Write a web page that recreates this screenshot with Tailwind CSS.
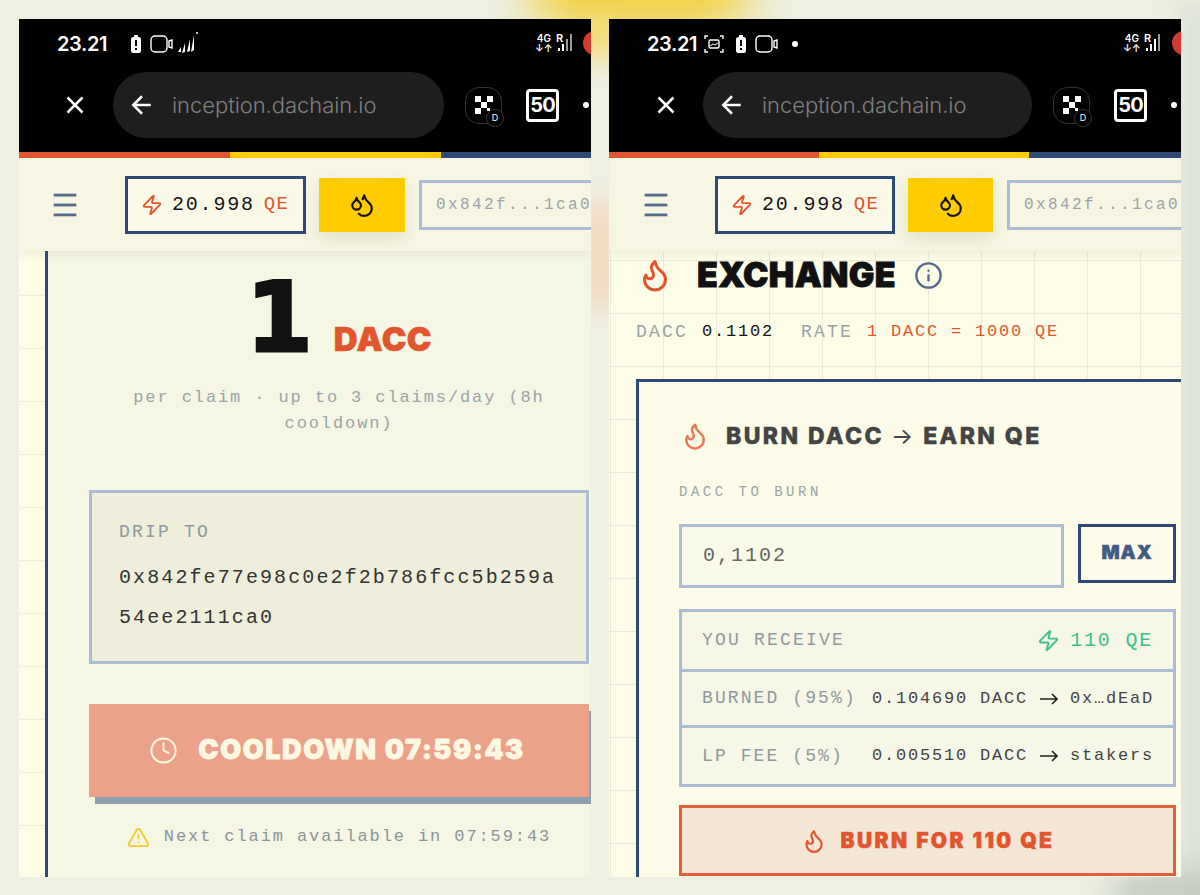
<!DOCTYPE html>
<html lang="en">
<head>
    <meta charset="UTF-8">
    <meta name="viewport" content="width=device-width, initial-scale=1.0">
    <title>DACChain Inception</title>
    <script src="https://cdn.jsdelivr.net/npm/@tailwindcss/browser@4"></script>
</head>
<body class="relative w-[1200px] h-[895px] overflow-hidden bg-[#eef0e2] font-['Liberation_Mono',monospace]">
    <!-- blurred wallpaper behind the two screenshots -->
    <div class="absolute left-[530px] top-[-50px] w-[220px] h-[80px] rounded-full bg-[#f2cf3c] blur-xl"></div>
    <div class="absolute left-[590px] top-[10px] w-[24px] h-[50px] rounded-full bg-[#f4da6c] blur-md"></div>
    <div class="absolute left-[585px] top-[200px] w-[30px] h-[110px] rounded-full bg-[#f5d5b8] blur-md"></div>
    <div class="absolute left-[1178px] top-[0px] w-[40px] h-[895px] bg-[#dde2d6] blur-md"></div>
    <div class="absolute left-[1110px] top-[870px] w-[130px] h-[50px] rounded-full bg-[#c3cbc1] blur-lg"></div>

    <div class="relative flex gap-[18px] pt-[19px] pl-[19px]">

        <!-- LEFT SCREEN: faucet -->
        <div class="w-[572px] h-[858px] overflow-hidden flex flex-col bg-[#f5f6e4]">
            <div class="h-[133px] bg-black shrink-0 text-white font-['Inter',sans-serif]">
                <div class="h-[48px] flex items-center relative pt-[2px]">
                    <span class="ml-[38px] w-[50px] text-[20px] tracking-[-0.4px] font-semibold leading-none">23.21</span>
                    <svg class="ml-[22px]" width="14" height="20" viewBox="0 0 14 20"><rect x="2" y="3" width="10" height="16" rx="2.5" fill="#fff"/><rect x="5" y="1" width="4" height="2" fill="#fff"/><rect x="6" y="6" width="2" height="6" fill="#000"/><rect x="6" y="14" width="2" height="2" fill="#000"/></svg>
                    <svg class="ml-[7px]" width="24" height="20" viewBox="0 0 24 20" fill="none" stroke="#fff" stroke-width="1.4"><rect x="1" y="2" width="16" height="16" rx="4"/><path d="M19 7l3-1v8l-3-1z"/></svg>
                    <svg class="ml-[2px] mb-[3px]" width="24" height="26" viewBox="0 0 24 26" fill="#fff"><path d="M2 22l3-5v5zM6 23l3-10v9zM11 22l3-13v12zM15 22l3-17v15z"/><circle cx="21" cy="3" r="1"/></svg>
                    <div class="absolute left-[516px] top-[14px] text-[10px] font-semibold leading-[10px] text-center">4G<br>↓↑</div>
                    <div class="absolute left-[537px] top-[14px] text-[11px] font-semibold leading-none">R</div>
                    <svg class="absolute left-[537px] top-[14px]" width="20" height="20" viewBox="0 0 20 20" fill="#fff"><rect x="2" y="15" width="2" height="3"/><rect x="6" y="11" width="2" height="7"/><rect x="10" y="6" width="2" height="12" fill="#9a9a9a"/><rect x="14" y="1" width="2" height="17" fill="#9a9a9a"/></svg>
                    <div class="absolute left-[564px] top-[12px] w-[24px] h-[24px] rounded-full bg-[#d43a30]"></div>
                </div>
                <div class="flex items-center mt-[5px]">
                    <svg class="ml-[41px] shrink-0" width="30" height="30" viewBox="0 0 24 24" fill="none" stroke="#fff" stroke-width="2"><path d="M18 6 6 18"/><path d="m6 6 12 12"/></svg>
                    <div class="ml-[23px] w-[331px] h-[66px] rounded-full bg-[#1e1e1e] flex items-center shrink-0">
                        <svg class="ml-[14px]" width="30" height="30" viewBox="0 0 24 24" fill="none" stroke="#fff" stroke-width="2"><path d="m12 19-7-7 7-7"/><path d="M19 12H5"/></svg>
                        <span class="ml-[15px] text-[22px] font-light text-[#808080] tracking-[-0.05px]">inception.dachain.io</span>
                    </div>
                    <div class="relative ml-[21px] w-[37px] h-[37px] rounded-[14px] border border-[#333] shrink-0 flex items-center justify-center">
                        <svg width="18" height="18" viewBox="0 0 6 6" fill="#fff"><rect width="2" height="2"/><rect x="4" width="2" height="2"/><rect x="2" y="2" width="2" height="2"/><rect y="4" width="2" height="2"/><rect x="4" y="4" width="1" height="1"/></svg>
                        <div class="absolute right-[-3px] bottom-[-4px] w-[18px] h-[18px] rounded-full bg-black border border-[#333] text-[9px] leading-[16px] text-center">D</div>
                    </div>
                    <div class="ml-[24px] w-[33px] h-[33px] border-[3px] border-white rounded-[4px] text-[20px] font-bold tracking-[-1px] leading-[27px] text-center shrink-0">50</div>
                    <div class="ml-[24px] w-[6px] h-[6px] rounded-full bg-white shrink-0"></div>
                </div>
            </div>
            <div class="h-[6px] flex shrink-0">
                <div class="w-[211px] shrink-0 bg-[#e2562f]"></div>
                <div class="w-[211px] shrink-0 bg-[#ffcc00]"></div>
                <div class="w-[211px] shrink-0 bg-[#2c4a75]"></div>
            </div>
            <div class="relative z-10 h-[93px] shrink-0 flex items-center bg-[#f6f6e3] shadow-[0_3px_8px_rgba(120,120,90,0.12)]">
                <svg class="ml-[29px] shrink-0" width="34" height="34" viewBox="0 0 24 24" fill="none" stroke="#566b8c" stroke-width="2"><path d="M4 5h16"/><path d="M4 12h16"/><path d="M4 19h16"/></svg>
                <div class="ml-[43px] w-[181px] h-[58px] border-[3px] border-[#2c4a75] bg-[#fbfae9] flex items-center shrink-0">
                    <svg class="ml-[13px]" width="22" height="22" viewBox="0 0 24 24" fill="none" stroke="#e2562f" stroke-width="2" stroke-linejoin="round"><path d="M4 14a1 1 0 0 1-.78-1.63l9.9-10.2a.5.5 0 0 1 .86.46l-1.92 6.02A1 1 0 0 0 13 10h7a1 1 0 0 1 .78 1.63l-9.9 10.2a.5.5 0 0 1-.86-.46l1.92-6.02A1 1 0 0 0 11 14z"/></svg>
                    <span class="ml-[9px] text-[20px] tracking-[1.8px] text-[#141414]">20.998</span>
                    <span class="ml-[9px] text-[19px] tracking-[1.4px] text-[#e2562f]">QE</span>
                </div>
                <div class="ml-[13px] w-[86px] h-[54px] bg-[#ffcc00] flex items-center justify-center shrink-0 shadow-[0_6px_14px_rgba(120,110,60,0.15)]">
                    <svg width="26" height="26" viewBox="0 0 24 24" fill="none" stroke="#141414" stroke-width="2" stroke-linecap="round" stroke-linejoin="round"><path d="M7 16.3c2.2 0 4-1.83 4-4.05 0-1.16-.57-2.26-1.71-3.19S7.29 6.75 7 5.3c-.29 1.45-1.14 2.84-2.29 3.76S3 11.1 3 12.25c0 2.22 1.8 4.05 4 4.05z"/><path d="M12.56 6.6A10.97 10.97 0 0 0 14 3.02c.5 2.5 2 4.9 4 6.5s3 3.5 3 5.5a6.98 6.98 0 0 1-11.91 4.97"/></svg>
                </div>
                <div class="ml-[14px] w-[220px] h-[50px] border-[3px] border-[#adbcd5] flex items-center pl-[14px] shrink-0 text-[16px] tracking-[2.4px] text-[#9aa4a8] whitespace-nowrap">0x842f...1ca0</div>
            </div>
            <div class="flex flex-1 min-h-0">
                <div class="w-[26px] shrink-0 bg-[#fdfde8] bg-[linear-gradient(#eeeedd_1px,transparent_1px)] bg-[size:100%_53px] bg-[position:0_44px]"></div>
                <div class="w-[546px] shrink-0 border-l-[3px] border-[#2c4a75] pl-[41px]">
                    <div class="w-[500px]">
                        <div class="flex items-baseline justify-center h-[134px] pt-[12px] leading-none">
                            <span class="font-['DejaVu_Sans',sans-serif] font-bold text-[#111] text-[96px] leading-[110px] [-webkit-text-stroke:3px_#111]">1</span>
                            <span class="ml-[21px] font-['Inter',sans-serif] font-black text-[#e2562f] text-[33px] tracking-[0.5px] [-webkit-text-stroke:0.6px_#e2562f]">DACC</span>
                        </div>
                        <p class="text-center text-[17px] leading-[26px] tracking-[1.9px] text-[#9aa5a8]">per claim · up to 3 claims/day (8h cooldown)</p>
                        <div class="mt-[53px] h-[174px] border-[3px] border-[#adbcd5] bg-[#eeeeda] pl-[27px] pt-[27px]">
                            <div class="text-[18px] leading-[24px] tracking-[2.2px] text-[#8f9a9e]">DRIP TO</div>
                            <div class="mt-[14px] text-[20px] leading-[40px] tracking-[2.1px] text-[#333]">0x842fe77e98c0e2f2b786fcc5b259a<br>54ee2111ca0</div>
                        </div>
                        <div class="mt-[40px] h-[93px] bg-[#eba288] shadow-[6px_7px_0_#8e9fb0] flex items-center justify-center font-['Inter',sans-serif] font-black text-[27px] tracking-[1.6px] text-[#fdf8e2] [-webkit-text-stroke:0.8px_#fdf8e2]">
                            <svg class="mr-[20px] ml-[-4px]" width="29" height="29" viewBox="0 0 24 24" fill="none" stroke="#fdf8e2" stroke-width="1.6" stroke-linecap="round" stroke-linejoin="round"><circle cx="12" cy="12" r="10"/><path d="M12 6v6l4 2"/></svg>
                            COOLDOWN 07:59:43
                        </div>
                        <div class="mt-[28px] flex items-center justify-center text-[17px] tracking-[1.9px] leading-[24px] text-[#8a9599]">
                            <svg class="mr-[14px]" width="23" height="23" viewBox="0 0 24 24" fill="none" stroke="#f2cd2c" stroke-width="2" stroke-linecap="round" stroke-linejoin="round"><path d="m21.73 18-8-14a2 2 0 0 0-3.48 0l-8 14A2 2 0 0 0 4 21h16a2 2 0 0 0 1.73-3"/><path d="M12 9v4"/><path d="M12 17h.01"/></svg>
                            Next claim available in 07:59:43
                        </div>
                    </div>
                </div>
            </div>
        </div>

        <!-- RIGHT SCREEN: exchange -->
        <div class="w-[572px] h-[858px] overflow-hidden flex flex-col bg-[#fdfde8]">
            <div class="h-[133px] bg-black shrink-0 text-white font-['Inter',sans-serif]">
                <div class="h-[48px] flex items-center relative pt-[2px]">
                    <span class="ml-[38px] w-[50px] text-[20px] tracking-[-0.4px] font-semibold leading-none">23.21</span>
                    <svg class="ml-[6px]" width="22" height="22" viewBox="0 0 22 22" fill="none" stroke="#fff" stroke-width="1.4"><path d="M2 6V3h3M17 3h3v3M2 16v3h3M17 19h3v-3"/><rect x="6" y="7" width="10" height="8" rx="1.5"/><path d="M7 13l3-2 2 1 3-2" stroke-width="1"/></svg>
                    <svg class="ml-[9px]" width="14" height="20" viewBox="0 0 14 20"><rect x="2" y="3" width="10" height="16" rx="2.5" fill="#fff"/><rect x="5" y="1" width="4" height="2" fill="#fff"/><rect x="6" y="6" width="2" height="6" fill="#000"/><rect x="6" y="14" width="2" height="2" fill="#000"/></svg>
                    <svg class="ml-[7px]" width="24" height="20" viewBox="0 0 24 20" fill="none" stroke="#fff" stroke-width="1.4"><rect x="1" y="2" width="16" height="16" rx="4"/><path d="M19 7l3-1v8l-3-1z"/></svg>
                    <div class="ml-[13px] w-[6px] h-[6px] rounded-full bg-white"></div>
                    <div class="absolute left-[514px] top-[14px] text-[10px] font-semibold leading-[10px] text-center">4G<br>↓↑</div>
                    <div class="absolute left-[535px] top-[14px] text-[11px] font-semibold leading-none">R</div>
                    <svg class="absolute left-[535px] top-[14px]" width="20" height="20" viewBox="0 0 20 20" fill="#fff"><rect x="2" y="15" width="2" height="3"/><rect x="6" y="11" width="2" height="7"/><rect x="10" y="6" width="2" height="12"/><rect x="14" y="1" width="2" height="17" fill="#9a9a9a"/></svg>
                    <div class="absolute left-[563px] top-[12px] w-[24px] h-[24px] rounded-full bg-[linear-gradient(90deg,#d43a30_50%,#999_50%)]"></div>
                </div>
                <div class="flex items-center mt-[5px]">
                    <svg class="ml-[42px] shrink-0" width="30" height="30" viewBox="0 0 24 24" fill="none" stroke="#fff" stroke-width="2"><path d="M18 6 6 18"/><path d="m6 6 12 12"/></svg>
                    <div class="ml-[22px] w-[329px] h-[66px] rounded-full bg-[#1e1e1e] flex items-center shrink-0">
                        <svg class="ml-[14px]" width="30" height="30" viewBox="0 0 24 24" fill="none" stroke="#fff" stroke-width="2"><path d="m12 19-7-7 7-7"/><path d="M19 12H5"/></svg>
                        <span class="ml-[15px] text-[22px] font-light text-[#808080] tracking-[-0.05px]">inception.dachain.io</span>
                    </div>
                    <div class="relative ml-[21px] w-[37px] h-[37px] rounded-[14px] border border-[#333] shrink-0 flex items-center justify-center">
                        <svg width="18" height="18" viewBox="0 0 6 6" fill="#fff"><rect width="2" height="2"/><rect x="4" width="2" height="2"/><rect x="2" y="2" width="2" height="2"/><rect y="4" width="2" height="2"/><rect x="4" y="4" width="1" height="1"/></svg>
                        <div class="absolute right-[-3px] bottom-[-4px] w-[18px] h-[18px] rounded-full bg-black border border-[#333] text-[9px] leading-[16px] text-center">D</div>
                    </div>
                    <div class="ml-[24px] w-[33px] h-[33px] border-[3px] border-white rounded-[4px] text-[20px] font-bold tracking-[-1px] leading-[27px] text-center shrink-0">50</div>
                    <div class="ml-[24px] w-[6px] h-[6px] rounded-full bg-white shrink-0"></div>
                </div>
            </div>
            <div class="h-[6px] flex shrink-0">
                <div class="w-[210px] shrink-0 bg-[#e2562f]"></div>
                <div class="w-[210px] shrink-0 bg-[#ffcc00]"></div>
                <div class="w-[211px] shrink-0 bg-[#2c4a75]"></div>
            </div>
            <div class="relative z-10 h-[93px] shrink-0 flex items-center bg-[#f6f6e3] shadow-[0_3px_8px_rgba(120,120,90,0.12)]">
                <svg class="ml-[30px] shrink-0" width="34" height="34" viewBox="0 0 24 24" fill="none" stroke="#566b8c" stroke-width="2"><path d="M4 5h16"/><path d="M4 12h16"/><path d="M4 19h16"/></svg>
                <div class="ml-[42px] w-[180px] h-[58px] border-[3px] border-[#2c4a75] bg-[#fbfae9] flex items-center shrink-0">
                    <svg class="ml-[13px]" width="22" height="22" viewBox="0 0 24 24" fill="none" stroke="#e2562f" stroke-width="2" stroke-linejoin="round"><path d="M4 14a1 1 0 0 1-.78-1.63l9.9-10.2a.5.5 0 0 1 .86.46l-1.92 6.02A1 1 0 0 0 13 10h7a1 1 0 0 1 .78 1.63l-9.9 10.2a.5.5 0 0 1-.86-.46l1.92-6.02A1 1 0 0 0 11 14z"/></svg>
                    <span class="ml-[9px] text-[20px] tracking-[1.8px] text-[#141414]">20.998</span>
                    <span class="ml-[9px] text-[19px] tracking-[1.4px] text-[#e2562f]">QE</span>
                </div>
                <div class="ml-[13px] w-[85px] h-[54px] bg-[#ffcc00] flex items-center justify-center shrink-0 shadow-[0_6px_14px_rgba(120,110,60,0.15)]">
                    <svg width="26" height="26" viewBox="0 0 24 24" fill="none" stroke="#141414" stroke-width="2" stroke-linecap="round" stroke-linejoin="round"><path d="M7 16.3c2.2 0 4-1.83 4-4.05 0-1.16-.57-2.26-1.71-3.19S7.29 6.75 7 5.3c-.29 1.45-1.14 2.84-2.29 3.76S3 11.1 3 12.25c0 2.22 1.8 4.05 4 4.05z"/><path d="M12.56 6.6A10.97 10.97 0 0 0 14 3.02c.5 2.5 2 4.9 4 6.5s3 3.5 3 5.5a6.98 6.98 0 0 1-11.91 4.97"/></svg>
                </div>
                <div class="ml-[14px] w-[220px] h-[50px] border-[3px] border-[#adbcd5] flex items-center pl-[14px] shrink-0 text-[16px] tracking-[2.4px] text-[#9aa4a8] whitespace-nowrap">0x842f...1ca0</div>
            </div>
            <div class="flex-1 min-h-0 bg-[#fdfde8] bg-[linear-gradient(#e9ead9_1px,transparent_1px),linear-gradient(90deg,#e9ead9_1px,transparent_1px)] bg-[size:53px_53px] bg-[position:1px_9px] pl-[27px]">
                <div class="flex items-center h-[48px]">
                    <svg class="ml-[1px]" width="36" height="36" viewBox="0 0 24 24" fill="none" stroke="#e2562f" stroke-width="2" stroke-linecap="round" stroke-linejoin="round"><path d="M8.5 14.5A2.5 2.5 0 0 0 11 12c0-1.38-.5-2-1-3-1.072-2.143-.224-4.054 2-6 .5 2.5 2 4.9 4 6.5 2 1.6 3 3.5 3 5.5a7 7 0 1 1-14 0c0-1.153.433-2.294 1-3a2.5 2.5 0 0 0 2.5 2.5z"/></svg>
                    <span class="ml-[24px] font-['Inter',sans-serif] font-black text-[34px] tracking-[0.4px] leading-none text-[#111] [-webkit-text-stroke:0.8px_#111]">EXCHANGE</span>
                    <svg class="ml-[18px]" width="29" height="29" viewBox="0 0 24 24" fill="none" stroke="#566b8c" stroke-width="2" stroke-linecap="round"><circle cx="12" cy="12" r="10"/><path d="M12 16v-4"/><path d="M12 8h.01"/></svg>
                </div>
                <div class="mt-[20px] flex text-[17px] leading-[26px] tracking-[1.8px] whitespace-nowrap">
                    <span class="text-[18px] tracking-[2.2px] text-[#9aa5a8]">DACC</span>
                    <span class="ml-[14px] text-[#141414]">0.1102</span>
                    <span class="ml-[27px] text-[18px] tracking-[2.2px] text-[#9aa5a8]">RATE</span>
                    <span class="ml-[14px] text-[#e2562f]">1 DACC = 1000 QE</span>
                </div>
                <div class="mt-[34px] w-[560px] h-[520px] border-[3px] border-[#2c4a75] bg-[#fcfce9] pl-[40px]">
                    <div class="pt-[38px] flex items-center h-[70px]">
                        <svg class="ml-[1px]" width="30" height="30" viewBox="0 0 24 24" fill="none" stroke="#e87a5c" stroke-width="2" stroke-linecap="round" stroke-linejoin="round"><path d="M8.5 14.5A2.5 2.5 0 0 0 11 12c0-1.38-.5-2-1-3-1.072-2.143-.224-4.054 2-6 .5 2.5 2 4.9 4 6.5 2 1.6 3 3.5 3 5.5a7 7 0 1 1-14 0c0-1.153.433-2.294 1-3a2.5 2.5 0 0 0 2.5 2.5z"/></svg>
                        <span class="ml-[16px] font-['Inter',sans-serif] font-extrabold text-[23px] tracking-[2.4px] text-[#444] [-webkit-text-stroke:0.5px_#444] whitespace-nowrap">BURN DACC <span class="font-normal [-webkit-text-stroke:0]">→</span> EARN QE</span>
                    </div>
                    <div class="mt-[30px] text-[14px] leading-[20px] tracking-[3.5px] text-[#9aa5a8]">DACC TO BURN</div>
                    <div class="mt-[22px] flex items-start">
                        <div class="w-[385px] h-[64px] border-[3px] border-[#adbcd5] bg-[#f9fae8] flex items-center pl-[21px] text-[20px] tracking-[2px] text-[#666]">0,1102</div>
                        <div class="ml-[14px] w-[98px] h-[59px] border-[3px] border-[#2c4a75] flex items-center justify-center font-['Inter',sans-serif] font-black text-[19px] tracking-[1px] text-[#3f5a85] [-webkit-text-stroke:0.5px_#3f5a85]">MAX</div>
                    </div>
                    <div class="mt-[21px] w-[497px] border-[3px] border-[#adbcd5] bg-[#f6f7e6] divide-y-[3px] divide-[#adbcd5]">
                        <div class="h-[60px] flex items-center justify-between px-[20px]">
                            <span class="text-[18px] tracking-[2.2px] text-[#8f9a9e]">YOU RECEIVE</span>
                            <span class="flex items-center text-[20px] tracking-[1.8px] text-[#3fbf88]">
                                <svg class="mr-[10px]" width="23" height="23" viewBox="0 0 24 24" fill="none" stroke="#3fbf88" stroke-width="2" stroke-linejoin="round"><path d="M4 14a1 1 0 0 1-.78-1.63l9.9-10.2a.5.5 0 0 1 .86.46l-1.92 6.02A1 1 0 0 0 13 10h7a1 1 0 0 1 .78 1.63l-9.9 10.2a.5.5 0 0 1-.86-.46l1.92-6.02A1 1 0 0 0 11 14z"/></svg>
                                110 QE
                            </span>
                        </div>
                        <div class="h-[56px] flex items-center justify-between pl-[20px] pr-[19px] whitespace-nowrap">
                            <span class="text-[18px] tracking-[2.1px] text-[#8f9a9e]">BURNED (95%)</span>
                            <span class="flex items-center text-[17px] tracking-[1.8px] text-[#444]">0.104690 DACC
                                <svg class="mx-[12px]" width="18" height="12" viewBox="0 0 18 12" fill="none" stroke="#222" stroke-width="1.6"><path d="M0 6h17M12 1l5 5-5 5"/></svg>
                                0x…dEaD</span>
                        </div>
                        <div class="h-[56px] flex items-center justify-between pl-[20px] pr-[19px] whitespace-nowrap">
                            <span class="text-[18px] tracking-[2.1px] text-[#8f9a9e]">LP FEE (5%)</span>
                            <span class="flex items-center text-[17px] tracking-[1.8px] text-[#444]">0.005510 DACC
                                <svg class="mx-[12px]" width="18" height="12" viewBox="0 0 18 12" fill="none" stroke="#222" stroke-width="1.6"><path d="M0 6h17M12 1l5 5-5 5"/></svg>
                                stakers</span>
                        </div>
                    </div>
                    <div class="mt-[18px] w-[497px] h-[71px] border-[3px] border-[#e0603a] bg-[#f5e6d5] flex items-center justify-center font-['Inter',sans-serif] font-black text-[21px] tracking-[2.4px] text-[#e2562f] [-webkit-text-stroke:0.5px_#e2562f]">
                        <svg class="mr-[14px]" width="26" height="26" viewBox="0 0 24 24" fill="none" stroke="#e2562f" stroke-width="2" stroke-linecap="round" stroke-linejoin="round"><path d="M8.5 14.5A2.5 2.5 0 0 0 11 12c0-1.38-.5-2-1-3-1.072-2.143-.224-4.054 2-6 .5 2.5 2 4.9 4 6.5 2 1.6 3 3.5 3 5.5a7 7 0 1 1-14 0c0-1.153.433-2.294 1-3a2.5 2.5 0 0 0 2.5 2.5z"/></svg>
                        BURN FOR 110 QE
                    </div>
                </div>
            </div>
        </div>
    </div>
</body>
</html>
